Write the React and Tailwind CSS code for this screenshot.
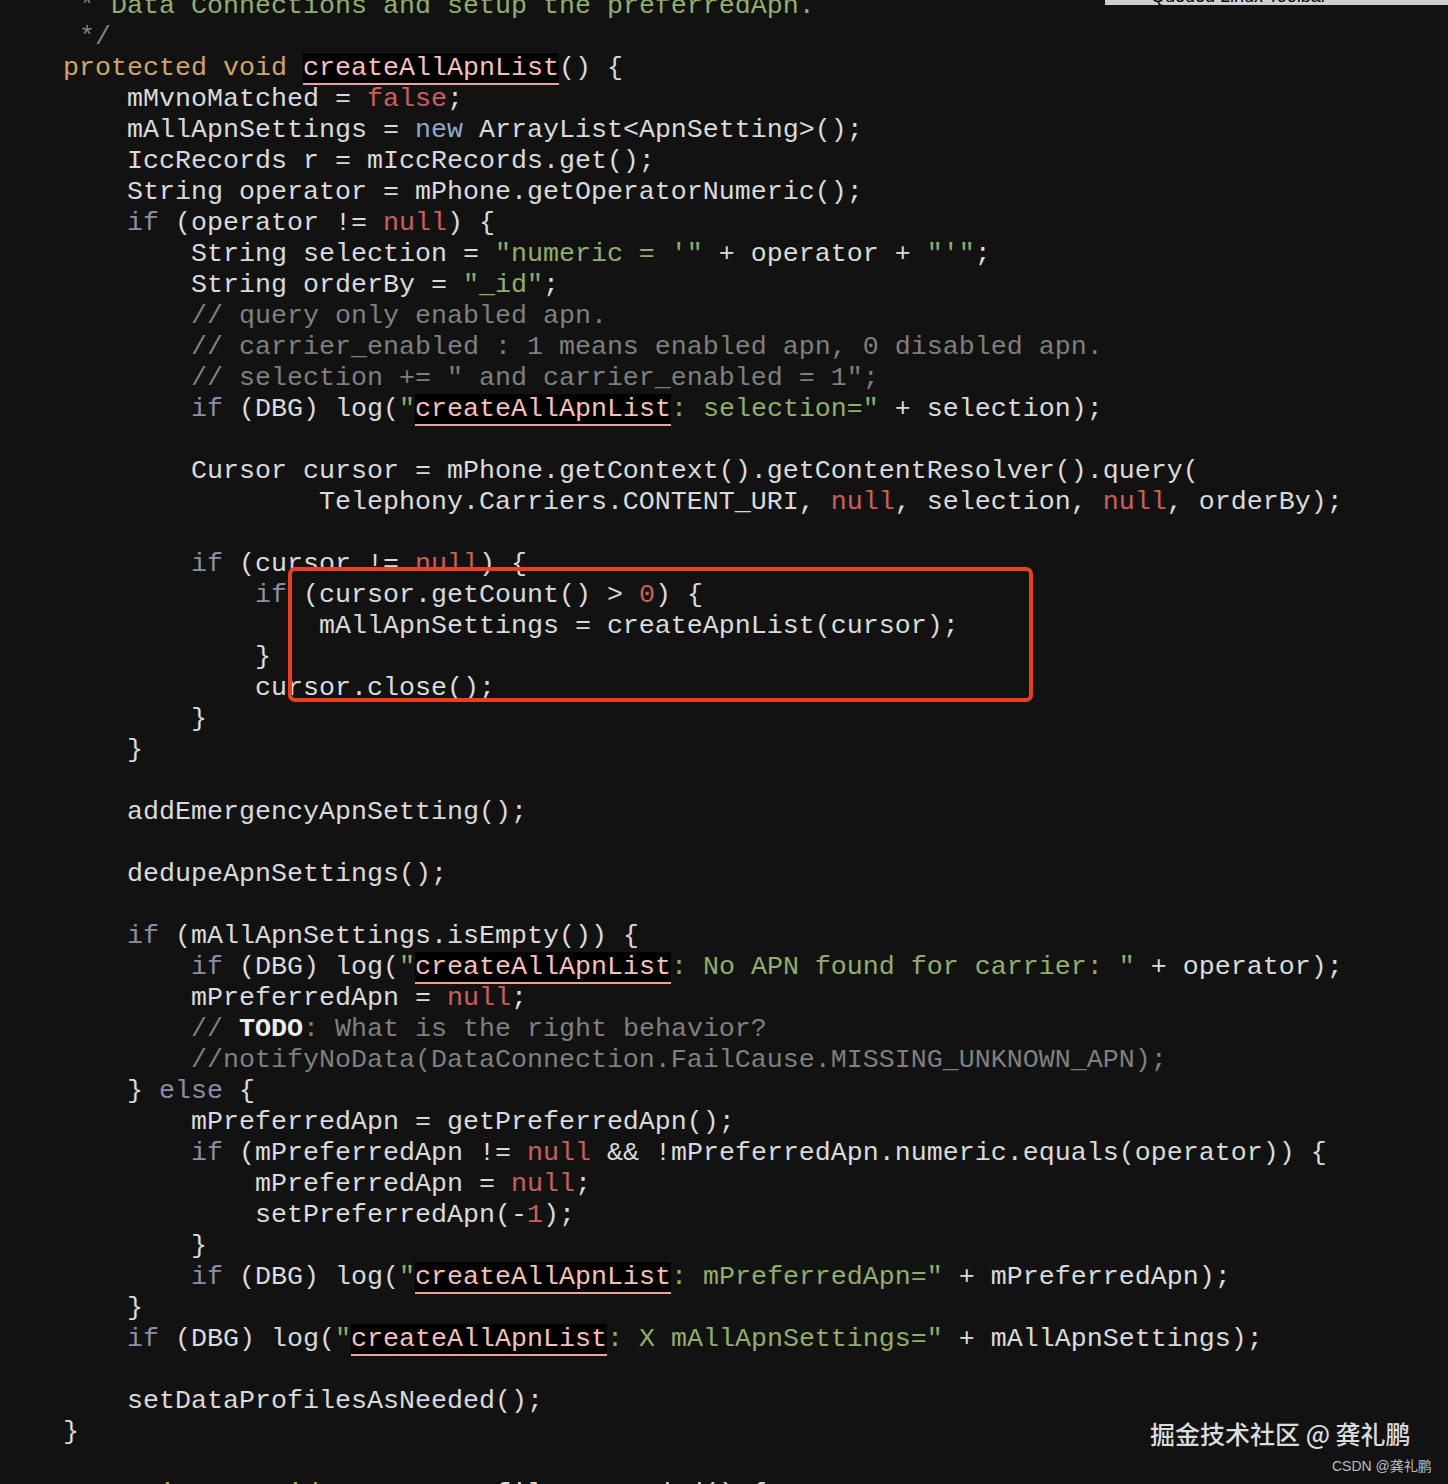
import React from 'react';

const lines = [
  ' * Data Connections and setup the preferredApn.',
  ' */',
  'protected void createAllApnList() {',
  '    mMvnoMatched = false;',
  '    mAllApnSettings = new ArrayList<ApnSetting>();',
  '    IccRecords r = mIccRecords.get();',
  '    String operator = mPhone.getOperatorNumeric();',
  '    if (operator != null) {',
  '        String selection = "numeric = \'" + operator + "\'";',
  '        String orderBy = "_id";',
  '        // query only enabled apn.',
  '        // carrier_enabled : 1 means enabled apn, 0 disabled apn.',
  '        // selection += " and carrier_enabled = 1";',
  '        if (DBG) log("createAllApnList: selection=" + selection);',
  '',
  '        Cursor cursor = mPhone.getContext().getContentResolver().query(',
  '                Telephony.Carriers.CONTENT_URI, null, selection, null, orderBy);',
  '',
  '        if (cursor != null) {',
  '            if (cursor.getCount() > 0) {',
  '                mAllApnSettings = createApnList(cursor);',
  '            }',
  '            cursor.close();',
  '        }',
  '    }',
  '',
  '    addEmergencyApnSetting();',
  '',
  '    dedupeApnSettings();',
  '',
  '    if (mAllApnSettings.isEmpty()) {',
  '        if (DBG) log("createAllApnList: No APN found for carrier: " + operator);',
  '        mPreferredApn = null;',
  '        // TODO: What is the right behavior?',
  '        //notifyNoData(DataConnection.FailCause.MISSING_UNKNOWN_APN);',
  '    } else {',
  '        mPreferredApn = getPreferredApn();',
  '        if (mPreferredApn != null && !mPreferredApn.numeric.equals(operator)) {',
  '            mPreferredApn = null;',
  '            setPreferredApn(-1);',
  '        }',
  '        if (DBG) log("createAllApnList: mPreferredApn=" + mPreferredApn);',
  '    }',
  '    if (DBG) log("createAllApnList: X mAllApnSettings=" + mAllApnSettings);',
  '',
  '    setDataProfilesAsNeeded();',
  '}',
  '',
  '    private void setDataProfilesAsNeeded() {',
];

const STYLE = {
  plain: 'text-[#dadada]',
  kw: 'text-[#8a8ea3]',
  newKw: 'text-[#8fa9c9]',
  decl: 'text-[#cfa46a]',
  lit: 'text-[#c9605c]',
  str: 'text-[#93ad6c]',
  comment: 'text-[#7f7f7f]',
  todo: 'text-[#ececec] font-bold',
  hl: 'bg-black text-[#f4c0b8] border-b-2 border-[#e8a49c]',
};

const TOKEN = /("[^"]*")|\b(if|else)\b|\b(new)\b|\b(protected|private|void)\b|\b(null|false|true|\d+)\b|\b(createAllApnList)\b/g;

// split a string on the highlighted method name
function splitName(text, base) {
  const out = [];
  text.split(/(createAllApnList)/).forEach((p) => {
    if (!p) return;
    out.push({ t: p, c: p === 'createAllApnList' ? STYLE.hl : base });
  });
  return out;
}

function tokenize(line, idx) {
  if (idx === 0) {
    return [
      { t: ' *', c: STYLE.comment },
      { t: ' Data Connections and setup the preferredApn.', c: STYLE.str },
    ];
  }
  const trimmed = line.trimStart();
  if (trimmed.startsWith('//') || trimmed.startsWith('*/')) {
    const out = [];
    line.split(/(TODO)/).forEach((p) => {
      if (!p) return;
      out.push({ t: p, c: p === 'TODO' ? STYLE.todo : STYLE.comment });
    });
    return out;
  }
  const out = [];
  let last = 0;
  let m;
  TOKEN.lastIndex = 0;
  while ((m = TOKEN.exec(line))) {
    if (m.index > last) out.push({ t: line.slice(last, m.index), c: STYLE.plain });
    if (m[1]) out.push(...splitName(m[1], STYLE.str));
    else if (m[2]) out.push({ t: m[2], c: STYLE.kw });
    else if (m[3]) out.push({ t: m[3], c: STYLE.newKw });
    else if (m[4]) out.push({ t: m[4], c: STYLE.decl });
    else if (m[5]) out.push({ t: m[5], c: STYLE.lit });
    else if (m[6]) out.push({ t: m[6], c: STYLE.hl });
    last = m.index + m[0].length;
  }
  if (last < line.length) out.push({ t: line.slice(last), c: STYLE.plain });
  return out;
}

const CodeLine = ({ line, idx }) => (
  <div className="h-[31px] leading-[31px] whitespace-pre">
    {tokenize(line, idx).map((s, i) => (
      <span key={i} className={s.c}>
        {s.t}
      </span>
    ))}
    {line === '' && ' '}
  </div>
);

export default function App() {
  return (
    <div className="relative w-full min-h-screen h-[1484px] overflow-hidden bg-[#121212]">
      <div
        className="mt-[-9.5px] pl-[63px] text-[26.67px]"
        style={{ fontFamily: '"Liberation Mono", "DejaVu Sans Mono", monospace' }}
      >
        {lines.map((l, i) => (
          <CodeLine key={i} line={l} idx={i} />
        ))}
      </div>

      {/* cut-off toolbar strip at top right */}
      <div className="absolute left-[1105px] top-0 w-[343px] h-[5px] overflow-hidden bg-[#cfcfcf]">
        <div className="mt-[-13px] pl-[46px] text-[18px] leading-[18px] text-black whitespace-nowrap font-['Liberation_Sans',sans-serif]">
          Queued Linux Toolbar
        </div>
      </div>

      {/* red annotation box */}
      <div className="absolute left-[288px] top-[567px] w-[745px] h-[135px] border-4 border-[#ea3f22] rounded-[7px]" />

      {/* watermarks */}
      <div className="absolute left-[1150px] top-[1416px] text-[25px] leading-[34px] font-medium text-[#dcdcdc] whitespace-nowrap font-['Noto_Sans_CJK_SC',sans-serif]">
        掘金技术社区 @ 龚礼鹏
      </div>
      <div className="absolute left-[1332px] top-[1456px] text-[14px] leading-[20px] text-[#bdbdbd] whitespace-nowrap font-['Liberation_Sans','Noto_Sans_CJK_SC',sans-serif]">
        CSDN @龚礼鹏
      </div>
    </div>
  );
}
